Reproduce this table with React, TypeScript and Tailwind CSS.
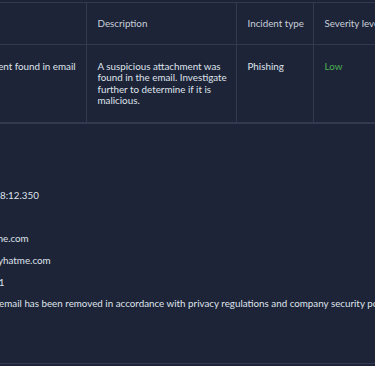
const rows = [
  {
    name: 'Potentially suspicious attachment found in email',
    description:
      'A suspicious attachment was found in the email. Investigate further to determine if it is malicious.',
    type: 'Phishing',
    severity: 'Low',
  },
];

const details = [
  { label: 'Incident ID', value: 'INC-0412' },
  { label: 'Source', value: 'Mail gateway' },
  { label: 'Status', value: 'Open' },
  { label: 'Scanned at', value: '2023-04-12 10:08:12.350' },
  { label: 'Direction', value: 'Inbound' },
  { label: 'From', value: 'payments@invoice-home.com' },
  { label: 'Recipient', value: 'mario.doe@securityhatme.com' },
  { label: 'Attachments in the message', value: '1' },
  {
    label: 'Message',
    value:
      'The content of this email has been removed in accordance with privacy regulations and company security policy.',
  },
];

const App = () => {
  return (
    <div className="w-full h-[366px] overflow-hidden bg-[#1d2438] text-[#dfe3eb] font-['Lato',sans-serif] text-[9.8px]">
      <div className="-ml-[138px] w-max pt-[2px]">
        <table className="table-fixed border-collapse">
          <colgroup>
            <col className="w-[224px]" />
            <col className="w-[150px]" />
            <col className="w-[77px]" />
            <col className="w-[110px]" />
          </colgroup>
          <thead>
            <tr className="h-[42px] border-y border-[#313a51] text-[#c9cfda]">
              <th className="pl-[7px] pr-[6px] text-left font-normal border-r border-[#313a51]">Name</th>
              <th className="pl-[11px] pr-[6px] text-left font-normal border-r border-[#313a51]">Description</th>
              <th className="pl-[11px] pr-[6px] text-left font-normal border-r border-[#313a51]">Incident type</th>
              <th className="pl-[11px] pr-[6px] text-left font-normal whitespace-nowrap">Severity level</th>
            </tr>
          </thead>
          <tbody>
            {rows.map((r) => (
              <tr key={r.name} className="h-[78px] border-b-2 border-[#313a51] align-top leading-[11.3px]">
                <td className="pl-[7px] pr-[6px] pt-[16px] border-r border-[#313a51] whitespace-nowrap">{r.name}</td>
                <td className="pl-[11px] pr-[6px] pt-[16px] border-r border-[#313a51]">{r.description}</td>
                <td className="pl-[11px] pr-[6px] pt-[16px] border-r border-[#313a51]">{r.type}</td>
                <td className="pl-[11px] pr-[6px] pt-[16px] text-[#4caf50]">{r.severity}</td>
              </tr>
            ))}
          </tbody>
        </table>
        <div className="flex flex-col gap-[9.6px] pl-[11px] pt-[1px] pb-[54px] border-b border-[#313a51] w-[760px]">
          {details.map((d) => (
            <p key={d.label} className="leading-[12px] whitespace-nowrap">
              {d.label}: {d.value}
            </p>
          ))}
        </div>
      </div>
    </div>
  );
};

export default App;
